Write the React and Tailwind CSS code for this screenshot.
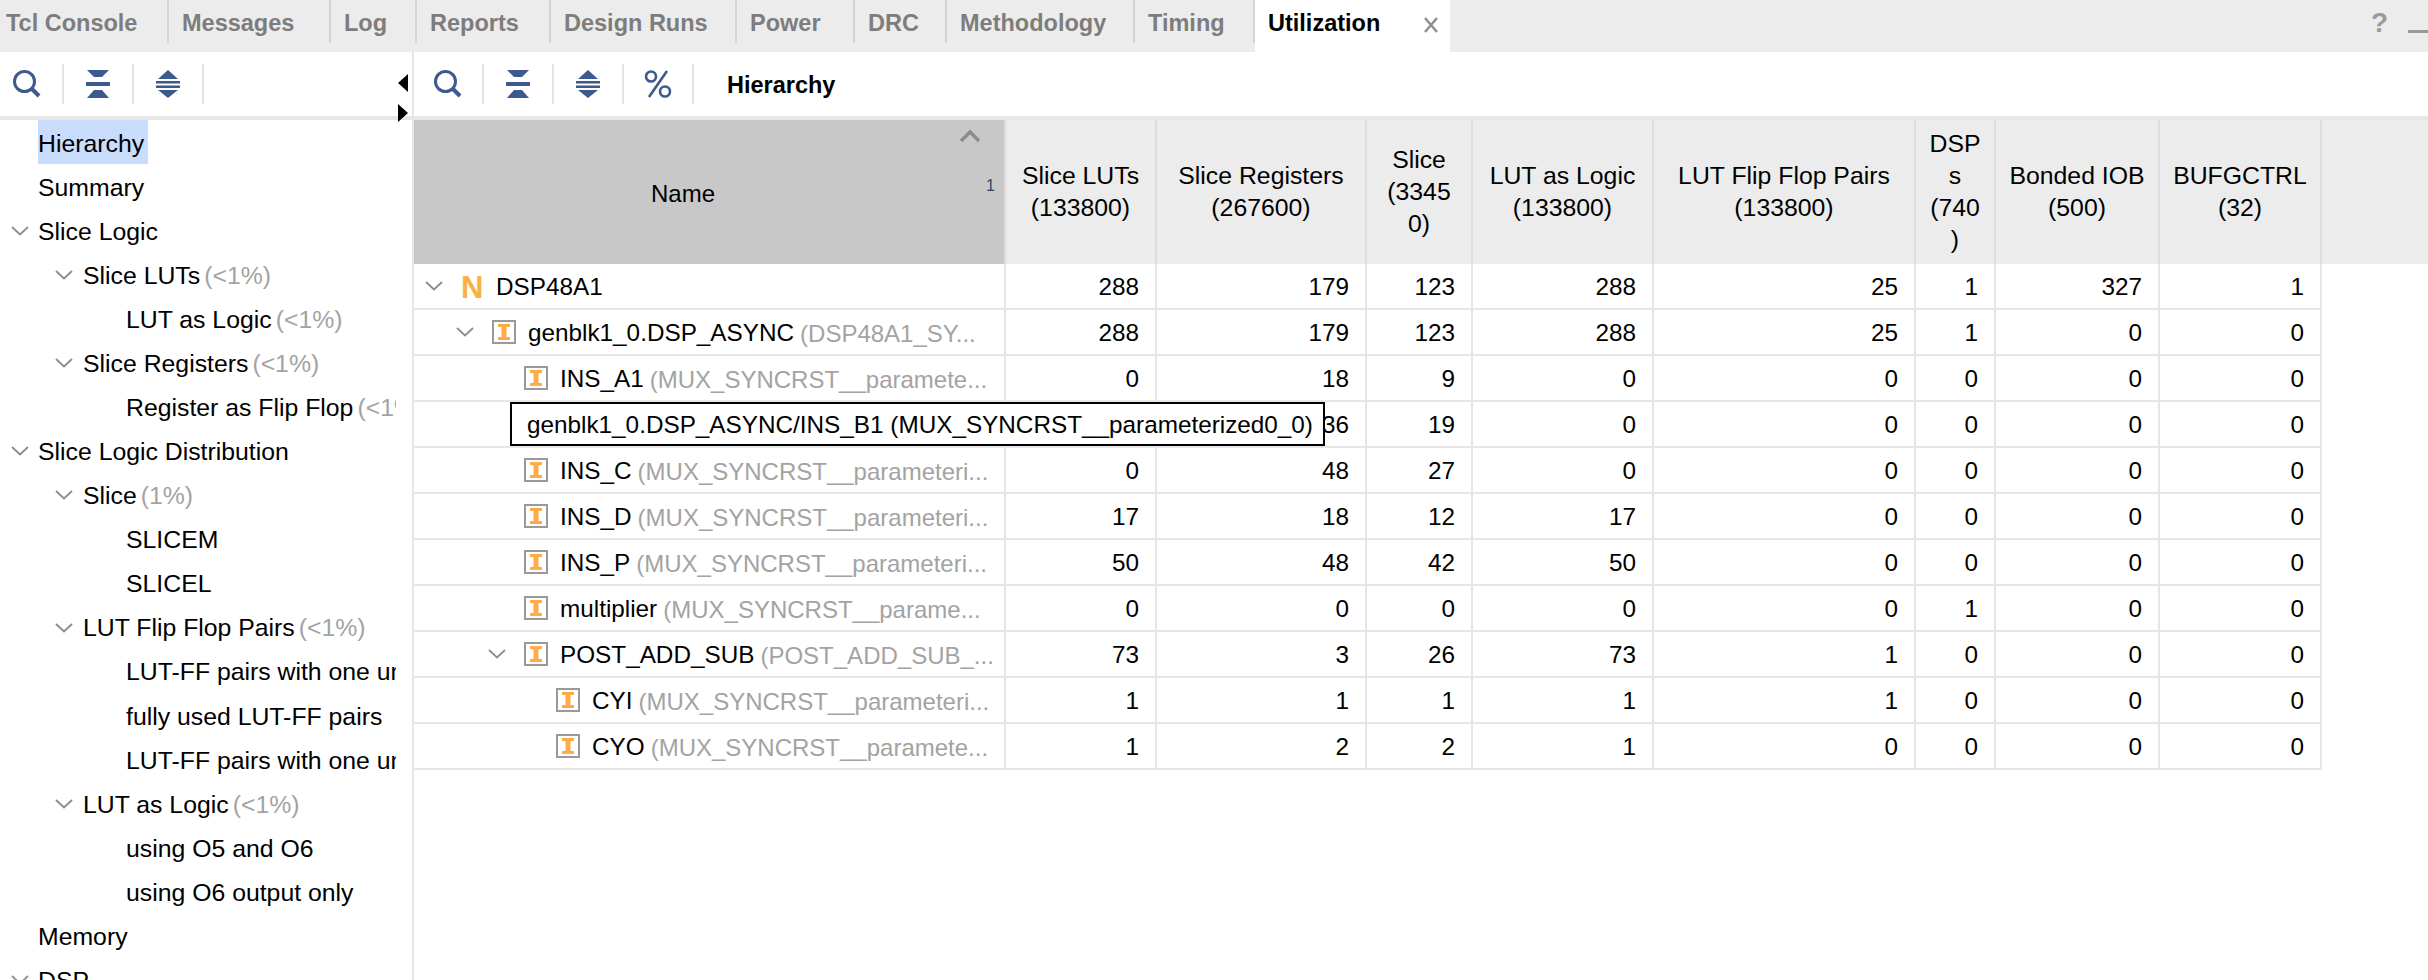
const tabs = [
  { label: "Tcl Console", cls: "w-[169px] pl-[6px]" },
  { label: "Messages", cls: "w-[162px] pl-[13px]" },
  { label: "Log", cls: "w-[86px] pl-[13px]" },
  { label: "Reports", cls: "w-[134px] pl-[13px]" },
  { label: "Design Runs", cls: "w-[186px] pl-[13px]" },
  { label: "Power", cls: "w-[118px] pl-[13px]" },
  { label: "DRC", cls: "w-[92px] pl-[13px]" },
  { label: "Methodology", cls: "w-[188px] pl-[13px]" },
  { label: "Timing", cls: "w-[120px] pl-[13px]" },
];

const tree = [
  { level: 0, label: "Hierarchy", selected: true },
  { level: 0, label: "Summary" },
  { level: 0, label: "Slice Logic", open: true },
  { level: 1, label: "Slice LUTs", pct: "(<1%)", open: true },
  { level: 2, label: "LUT as Logic", pct: "(<1%)" },
  { level: 1, label: "Slice Registers", pct: "(<1%)", open: true },
  { level: 2, label: "Register as Flip Flop", pct: "(<1%)" },
  { level: 0, label: "Slice Logic Distribution", open: true },
  { level: 1, label: "Slice", pct: "(1%)", open: true },
  { level: 2, label: "SLICEM" },
  { level: 2, label: "SLICEL" },
  { level: 1, label: "LUT Flip Flop Pairs", pct: "(<1%)", open: true },
  { level: 2, label: "LUT-FF pairs with one unused LUT" },
  { level: 2, label: "fully used LUT-FF pairs" },
  { level: 2, label: "LUT-FF pairs with one unused Flip Flop" },
  { level: 1, label: "LUT as Logic", pct: "(<1%)", open: true },
  { level: 2, label: "using O5 and O6" },
  { level: 2, label: "using O6 output only" },
  { level: 0, label: "Memory" },
  { level: 0, label: "DSP", open: true },
];

const colWidths = ["w-[151px]", "w-[210px]", "w-[106px]", "w-[181px]", "w-[262px]", "w-[80px]", "w-[164px]", "w-[162px]"];

const headers = [
  ["Slice LUTs", "(133800)"],
  ["Slice Registers", "(267600)"],
  ["Slice", "(3345", "0)"],
  ["LUT as Logic", "(133800)"],
  ["LUT Flip Flop Pairs", "(133800)"],
  ["DSP", "s", "(740", ")"],
  ["Bonded IOB", "(500)"],
  ["BUFGCTRL", "(32)"],
];

const rows = [
  { level: 0, kind: "N", open: true, name: "DSP48A1", vals: [288, 179, 123, 288, 25, 1, 327, 1] },
  { level: 1, open: true, name: "genblk1_0.DSP_ASYNC", sub: "(DSP48A1_SY...", vals: [288, 179, 123, 288, 25, 1, 0, 0] },
  { level: 2, name: "INS_A1", sub: "(MUX_SYNCRST__paramete...", vals: [0, 18, 9, 0, 0, 0, 0, 0] },
  { level: 2, name: "INS_B1", sub: "(MUX_SYNCRST__parameteri...", vals: [0, 36, 19, 0, 0, 0, 0, 0] },
  { level: 2, name: "INS_C", sub: "(MUX_SYNCRST__parameteri...", vals: [0, 48, 27, 0, 0, 0, 0, 0] },
  { level: 2, name: "INS_D", sub: "(MUX_SYNCRST__parameteri...", vals: [17, 18, 12, 17, 0, 0, 0, 0] },
  { level: 2, name: "INS_P", sub: "(MUX_SYNCRST__parameteri...", vals: [50, 48, 42, 50, 0, 0, 0, 0] },
  { level: 2, name: "multiplier", sub: "(MUX_SYNCRST__parame...", vals: [0, 0, 0, 0, 0, 1, 0, 0] },
  { level: 2, open: true, name: "POST_ADD_SUB", sub: "(POST_ADD_SUB_...", vals: [73, 3, 26, 73, 1, 0, 0, 0] },
  { level: 3, name: "CYI", sub: "(MUX_SYNCRST__parameteri...", vals: [1, 1, 1, 1, 1, 0, 0, 0] },
  { level: 3, name: "CYO", sub: "(MUX_SYNCRST__paramete...", vals: [1, 2, 2, 1, 0, 0, 0, 0] },
];

const blue = "#3d5a8e";

function SearchIcon() {
  return (
    <svg width="30" height="30" viewBox="0 0 30 30" fill="none">
      <circle cx="12.5" cy="12.5" r="10" stroke={blue} strokeWidth="3" />
      <path d="M20 20 L27 27" stroke={blue} strokeWidth="4" />
    </svg>
  );
}

function CollapseIcon() {
  return (
    <svg width="24" height="28" viewBox="0 0 24 28" fill={blue}>
      <path d="M1 0 H23 L16 7 H8 Z" />
      <rect x="0" y="12" width="24" height="4" />
      <path d="M8 20 H16 L23 28 H1 Z" />
    </svg>
  );
}

function ExpandIcon() {
  return (
    <svg width="24" height="28" viewBox="0 0 24 28" fill={blue}>
      <path d="M12 0 L22 9 H2 Z" />
      <rect x="0" y="11" width="24" height="2.5" />
      <rect x="0" y="15.5" width="24" height="2.5" />
      <path d="M2 20 H22 L12 28 Z" />
    </svg>
  );
}

function PercentIcon() {
  return (
    <svg width="28" height="28" viewBox="0 0 28 28" fill="none" stroke={blue} strokeWidth="2.6">
      <circle cx="7" cy="6.5" r="5" />
      <circle cx="21" cy="21.5" r="5" />
      <path d="M23 1 L5 27" />
    </svg>
  );
}

function ToolButton({ first, children, offset }) {
  return (
    <div
      className={`h-[40px] flex items-center justify-center border-r-2 border-[#e2e2e2] ${
        first ? offset : "w-[70px]"
      }`}
    >
      {children}
    </div>
  );
}

function Chevron() {
  return (
    <svg width="18" height="10" viewBox="0 0 18 10" fill="none" stroke="#8c8c8c" strokeWidth="1.8">
      <path d="M1 1 L9 8.5 L17 1" />
    </svg>
  );
}

function CellIcon() {
  return (
    <svg width="24" height="24" viewBox="0 0 24 24" className="shrink-0">
      <rect x="1" y="1" width="22" height="22" fill="#fff" stroke="#9a9a9a" strokeWidth="2" />
      <path d="M6 4 H18 V7 H14.5 V17 H18 V20 H6 V17 H9.5 V7 H6 Z" fill="#ffab4a" />
    </svg>
  );
}

function TreeRow({ item }) {
  const pads = ["pl-[38px]", "pl-[83px]", "pl-[126px]"];
  const chevrons = ["left-[11px]", "left-[55px]"];
  return (
    <div className={`relative h-[44.05px] flex items-center whitespace-nowrap ${pads[item.level]}`}>
      {item.open && (
        <span className={`absolute top-[18px] flex ${chevrons[item.level]}`}>
          <Chevron />
        </span>
      )}
      <span className={`h-full flex items-center pt-[3px] ${item.selected ? "bg-[#cadcfc] pr-[4px]" : ""}`}>
        {item.label}
      </span>
      {item.pct && <span className="ml-[4px] pt-[3px] text-[#a3a3a3]">{item.pct}</span>}
    </div>
  );
}

function NameCell({ row }) {
  const pads = ["pl-[11px]", "pl-[42px]", "pl-[74px]", "pl-[106px]"];
  return (
    <div className={`w-[592px] h-full shrink-0 flex items-center border-r-2 border-[#e6e6e6] whitespace-nowrap overflow-hidden ${pads[row.level]}`}>
      <span className="w-[18px] mr-[19px] shrink-0 flex">{row.open && <Chevron />}</span>
      {row.kind === "N" ? (
        <span className="w-[23px] -ml-[1px] mr-[12px] font-bold text-[31px] text-[#fcb040] leading-none pt-[2px]">N</span>
      ) : (
        <span className="mr-[12px] -ml-[1px] flex"><CellIcon /></span>
      )}
      <span className="pt-[3px]">{row.name}</span>
      {row.sub && <span className="ml-[6px] pt-[3px] text-[24px] text-[#a3a3a3]">{row.sub}</span>}
    </div>
  );
}

export default function App() {
  return (
    <div className="relative h-screen w-full overflow-hidden bg-white text-[24.3px] text-black font-['Liberation_Sans',Arial,sans-serif]">
      {/* tab strip */}
      <div className="h-[52px] flex bg-[#ececec]">
        {tabs.map((t) => (
          <div key={t.label} className={`h-[43px] flex items-center border-r-2 border-[#d4d4d4] font-bold text-[23.5px] text-[#7d7d7d] ${t.cls}`}>
            <span className="pt-[5px]">{t.label}</span>
          </div>
        ))}
        <div className="w-[195px] h-[52px] flex bg-white items-start pl-[13px] pt-[4px] font-bold text-[23.5px] text-black">
          <span className="h-[40px] flex items-center">Utilization</span>
          <svg width="16" height="16" viewBox="0 0 16 16" className="ml-[43px] mt-[13px]" fill="none" stroke="#8c8c8c" strokeWidth="2.4">
            <path d="M2 1 L14 15 M14 1 L2 15" />
          </svg>
        </div>
        <div className="flex-1 flex justify-end items-start">
          <span className="font-bold text-[28px] text-[#9a9a9a] mt-[7px] leading-[32px]">?</span>
          <span className="w-[20px] h-[3px] bg-[#999999] mt-[30px] ml-[20px]" />
        </div>
      </div>

      <div className="flex h-[928px]">
        {/* left pane */}
        <div className="w-[414px] shrink-0 border-r-2 border-[#e6e6e6]">
          <div className="h-[68px] pt-[12px] flex items-start border-b-4 border-[#e6e6e6]">
            <ToolButton first offset="w-[64px] pr-[8px]"><SearchIcon /></ToolButton>
            <ToolButton><CollapseIcon /></ToolButton>
            <ToolButton><ExpandIcon /></ToolButton>
          </div>
          <div className="w-[396px] overflow-hidden text-[24.8px]">
            {tree.map((item, i) => (
              <TreeRow key={i} item={item} />
            ))}
          </div>
        </div>

        {/* right pane */}
        <div className="flex-1 min-w-0">
          <div className="h-[68px] pt-[12px] flex items-start border-b-4 border-[#e6e6e6]">
            <ToolButton first offset="w-[70px]"><SearchIcon /></ToolButton>
            <ToolButton><CollapseIcon /></ToolButton>
            <ToolButton><ExpandIcon /></ToolButton>
            <ToolButton><PercentIcon /></ToolButton>
            <span className="ml-[33px] h-[42px] pt-[2px] flex items-center font-bold text-[23.5px]">Hierarchy</span>
          </div>

          <div className="relative">
            <div className="h-[144px] flex bg-[#ececec] text-[24.8px]">
              <div className="relative w-[592px] shrink-0 bg-[#c8c8c8] border-r-2 border-[#dcdcdc] flex items-center justify-center pr-[52px]">
                <span className="text-[24px] mt-[4px]">Name</span>
                <svg width="22" height="14" viewBox="0 0 22 14" className="absolute right-[23px] top-[9px]" fill="none" stroke="#8c8c8c" strokeWidth="3.4">
                  <path d="M2 12 L11 3 L20 12" />
                </svg>
                <span className="absolute right-[9px] top-[56px] text-[16px] leading-[20px] text-[#2d4a6e]">1</span>
              </div>
              {headers.map((lines, i) => (
                <div key={i} className={`h-full shrink-0 flex flex-col items-center justify-center border-r-2 border-[#dcdcdc] leading-[32px] ${colWidths[i]}`}>
                  {lines.map((l, j) => (
                    <span key={j}>{l}</span>
                  ))}
                </div>
              ))}
            </div>

            {rows.map((row) => (
              <div key={row.name} className="h-[46px] w-[1908px] flex border-b-2 border-[#e6e6e6]">
                <NameCell row={row} />
                {row.vals.map((v, i) => (
                  <div key={i} className={`h-full shrink-0 flex items-center justify-end border-r-2 border-[#e6e6e6] pr-[16px] pt-[3px] ${colWidths[i]}`}>
                    {v}
                  </div>
                ))}
              </div>
            ))}

            {/* hover tooltip over the INS_B1 row */}
            <div className="absolute left-[96px] top-[282px] w-[815px] h-[44px] border-2 border-black bg-white flex items-center pl-[15px] pt-[2px] whitespace-nowrap">
              genblk1_0.DSP_ASYNC/INS_B1 (MUX_SYNCRST__parameterized0_0)
            </div>
          </div>
        </div>
      </div>

      {/* splitter arrows */}
      <svg width="10" height="18" viewBox="0 0 10 18" className="absolute left-[398px] top-[74px]">
        <path d="M10 0 V18 L0 9 Z" fill="#000" />
      </svg>
      <svg width="10" height="18" viewBox="0 0 10 18" className="absolute left-[398px] top-[104px]">
        <path d="M0 0 V18 L10 9 Z" fill="#000" />
      </svg>
    </div>
  );
}
